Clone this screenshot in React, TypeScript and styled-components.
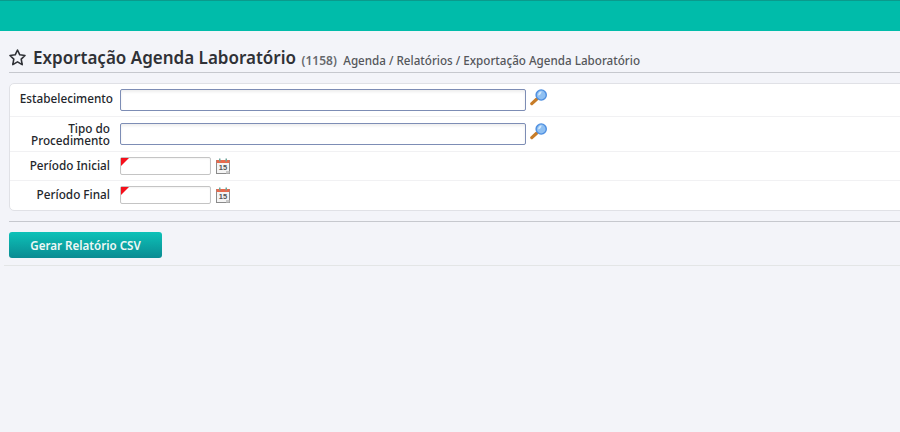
import React from 'react';
import styled, { createGlobalStyle } from 'styled-components';

const GlobalStyle = createGlobalStyle`
  html, body { margin: 0; padding: 0; height: 100%; overflow: hidden; background: #f3f4f9; }
  body { font-family: 'Noto Sans', 'DejaVu Sans', sans-serif; }
`;

const TopBar = styled.div`
  height: 30px;
  background: #00bcaa;
  border-top: 1px solid #0a9a8c;
`;

const Content = styled.div`
  padding: 14px 0 0 4px;
`;

const TitleRow = styled.div`
  display: flex;
  align-items: center;
  height: 27px;
  margin-left: 5px;
  border-bottom: 1px solid #c6c8ce;
`;

const Title = styled.h1`
  margin: 0 0 2px 7px;
  font-size: 17px;
  font-weight: 600;
  color: #2f3136;
  white-space: nowrap;
`;

const Code = styled.span`
  margin-left: 5.5px;
  padding-top: 3px;
  font-size: 12px;
  font-weight: 600;
  color: #66686c;
`;

const Crumbs = styled.span`
  margin-left: 6.5px;
  padding-top: 3px;
  font-size: 11.65px;
  font-weight: 500;
  color: #55575b;
  white-space: nowrap;
`;

const Panel = styled.div`
  margin: 10px -12px 0 5px;
  padding-bottom: 1px;
  background: #fff;
  border: 1px solid #e0e1e6;
  border-radius: 5px;
`;

const Row = styled.div<{ $h: number }>`
  display: grid;
  grid-template-columns: 110px 1fr;
  align-items: center;
  height: ${p => p.$h}px;
  border-bottom: 1px solid #f1f1f3;
  &:last-child { border-bottom: 0; }
`;

const Label = styled.label<{ $right?: number; $lift?: number }>`
  font-size: 11.75px;
  line-height: 12px;
  font-weight: 500;
  color: #23262b;
  text-align: right;
  margin-right: ${p => p.$right ?? 10}px;
  margin-bottom: ${p => p.$lift ?? 0}px;
`;

const Field = styled.div`
  display: flex;
  align-items: center;
  gap: 4px;
`;

const TextInput = styled.div`
  width: 404px;
  height: 20px;
  background: #fff;
  border: 1px solid #7d8db5;
  border-radius: 2px;
  box-shadow: inset 0 2px 3px rgba(0, 0, 0, 0.07);
`;

const DateInput = styled.div`
  position: relative;
  width: 89px;
  height: 16px;
  background: #fff;
  border: 1px solid #c4c4c4;
  border-radius: 2px;
  box-shadow: inset 0 1px 2px rgba(0, 0, 0, 0.05);

  &::before {
    content: '';
    position: absolute;
    top: 0;
    left: 0;
    border-top: 8px solid #f5101c;
    border-right: 8px solid transparent;
  }
`;

const Divider = styled.div`
  height: 1px;
  margin: 10px 0 0 5px;
  background: #c6c8ce;
`;

const Button = styled.button`
  display: block;
  width: 153px;
  height: 26px;
  margin: 10px 0 0 5px;
  padding: 0;
  border: 0;
  border-radius: 3px;
  background: linear-gradient(#0dc2b8, #0a8b92);
  color: #eef8f6;
  font-family: inherit;
  font-size: 11.6px;
  font-weight: 600;
`;

const BottomLine = styled.div`
  height: 1px;
  margin-top: 7px;
  background: #e3e5e6;
`;

const StarIcon = () => (
  <svg width="17" height="17" viewBox="0 0 17 17" style={{ marginBottom: 2 }}>
    <path
      d="M8.5 1 10.8 5.8 16 6.5 12.2 10.1 13.2 15.6 8.5 12.9 3.8 15.6 4.8 10.1 1 6.5 6.2 5.8Z"
      fill="none"
      stroke="#2f3136"
      strokeWidth="1.6"
      strokeLinejoin="round"
    />
  </svg>
);

const LensIcon = () => (
  <svg width="18" height="17" viewBox="0 0 18 17" style={{ marginTop: -6 }}>
    <path d="M1.8 14.6 6.6 10.2" stroke="#c77c28" strokeWidth="3.2" strokeLinecap="round" />
    <circle cx="11.2" cy="6" r="5.8" fill="#4f8fe0" />
    <circle cx="11.2" cy="6" r="4.4" fill="#8fc0f2" />
    <path d="M11.6 2.2A3.8 3.8 0 0 0 8.2 6.6 5 5 0 0 0 11.6 2.2Z" fill="#d3e8fb" />
  </svg>
);

const CalendarIcon = () => (
  <svg width="14" height="16" viewBox="0 0 14 16" style={{ marginLeft: 1 }}>
    <rect x="0.5" y="2.5" width="13" height="13" fill="#f4f4f4" stroke="#8a8a8a" />
    <rect x="0.5" y="2" width="13" height="3" fill="#e8694c" />
    <rect x="3" y="0.5" width="1.5" height="3" fill="#6fa59c" />
    <rect x="9.5" y="0.5" width="1.5" height="3" fill="#6fa59c" />
    <text x="7" y="12.2" textAnchor="middle" fontFamily="'Liberation Sans', sans-serif" fontSize="7.5" fontWeight="700" fill="#555">15</text>
    <rect x="10" y="13" width="3.5" height="2.5" fill="#c9c9c9" />
  </svg>
);

export default function App() {
  return (
    <>
      <GlobalStyle />
      <TopBar />
      <Content>
        <TitleRow>
          <StarIcon />
          <Title>Exportação Agenda Laboratório</Title>
          <Code>(1158)</Code>
          <Crumbs>Agenda / Relatórios / Exportação Agenda Laboratório</Crumbs>
        </TitleRow>
        <Panel>
          <Row $h={32}>
            <Label $right={7} $lift={5}>Estabelecimento</Label>
            <Field>
              <TextInput />
              <LensIcon />
            </Field>
          </Row>
          <Row $h={34}>
            <Label>Tipo do Procedimento</Label>
            <Field>
              <TextInput />
              <LensIcon />
            </Field>
          </Row>
          <Row $h={28}>
            <Label $lift={2}>Período Inicial</Label>
            <Field>
              <DateInput />
              <CalendarIcon />
            </Field>
          </Row>
          <Row $h={28}>
            <Label $lift={2}>Período Final</Label>
            <Field>
              <DateInput />
              <CalendarIcon />
            </Field>
          </Row>
        </Panel>
        <Divider />
        <Button>Gerar Relatório CSV</Button>
        <BottomLine />
      </Content>
    </>
  );
}
